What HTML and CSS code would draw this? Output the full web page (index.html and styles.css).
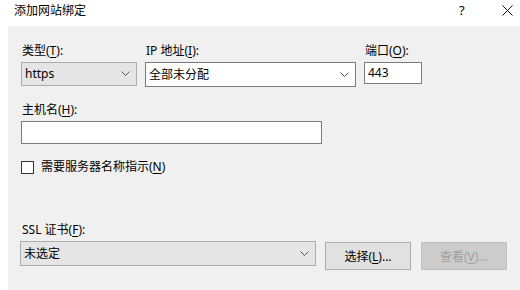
FILE: index.html
```html
<!DOCTYPE html>
<html lang="zh-CN">
<head>
<meta charset="utf-8">
<title>添加网站绑定</title>
<link rel="stylesheet" href="styles.css">
</head>
<body>
<div class="dialog">
  <div class="titlebar">
    <span class="title">添加网站绑定</span>
    <span class="help">?</span>
    <span class="close">
      <svg width="11" height="11" viewBox="0 0 11 11"><path d="M0.5 0.5 L10.5 10.5 M10.5 0.5 L0.5 10.5" stroke="#111" stroke-width="1" fill="none"/></svg>
    </span>
  </div>
  <div class="frame">
    <div class="panel">
      <div class="row top-row">
        <div class="field f-type">
          <div class="label">类型(<u>T</u>):</div>
          <div class="combo gray"><span>https</span><svg class="chev" width="9" height="5" viewBox="0 0 9 5"><path d="M0.5 0.5 L4.5 4.5 L8.5 0.5" stroke="#555" fill="none"/></svg></div>
        </div>
        <div class="field f-ip">
          <div class="label">IP 地址(<u>I</u>):</div>
          <div class="combo white"><span>全部未分配</span><svg class="chev" width="9" height="5" viewBox="0 0 9 5"><path d="M0.5 0.5 L4.5 4.5 L8.5 0.5" stroke="#555" fill="none"/></svg></div>
        </div>
        <div class="field f-port">
          <div class="label">端口(<u>O</u>):</div>
          <div class="textbox port">443</div>
        </div>
      </div>
      <div class="field f-host">
        <div class="label">主机名(<u>H</u>):</div>
        <div class="textbox host"></div>
      </div>
      <div class="check-row">
        <span class="checkbox"></span>
        <span class="check-label">需要服务器名称指示(<u>N</u>)</span>
      </div>
      <div class="field f-ssl">
        <div class="label">SSL 证书(<u>F</u>):</div>
        <div class="ssl-row">
          <div class="combo gray ssl"><span>未选定</span><svg class="chev" width="9" height="5" viewBox="0 0 9 5"><path d="M0.5 0.5 L4.5 4.5 L8.5 0.5" stroke="#555" fill="none"/></svg></div>
          <div class="button">选择(<u>L</u>)...</div>
          <div class="button disabled">查看(<u>V</u>)...</div>
        </div>
      </div>
    </div>
  </div>
</div>
</body>
</html>
```
FILE: styles.css
```css
html, body {
  margin: 0;
  padding: 0;
  background: #ffffff;
}
body {
  font-family: "Noto Sans", "Noto Sans CJK SC", sans-serif;
  font-size: 12px;
  color: #000;
}
u {
  text-decoration: underline;
  text-underline-offset: 2px;
}
.dialog {
  width: 520px;
  height: 290px;
  display: flex;
  flex-direction: column;
  overflow: hidden;
}
.titlebar {
  height: 26px;
  display: flex;
  align-items: center;
  background: #fff;
}
.title {
  margin-left: 14px;
  margin-top: -6px;
  flex: 1;
  font-size: 12px;
}
.help {
  width: 12px;
  margin-top: -6px;
  font-size: 13px;
  margin-right: 31px;
}
.close {
  margin-right: 7px;
  margin-top: -6px;
  display: flex;
}
.frame {
  flex: 1;
  display: flex;
  padding-left: 8px;
}
.panel {
  flex: 1;
  background: #f0f0f0;
  padding: 17px 0 0 13px;
}
.row {
  display: flex;
}
.label {
  height: 16px;
  line-height: 16px;
  margin-bottom: 3px;
  padding-left: 1px;
}
.f-type { width: 116px; margin-right: 8px; }
.f-ip { width: 211px; margin-right: 8px; }
.f-port { width: 58px; }
.combo {
  height: 23px;
  box-sizing: border-box;
  display: flex;
  align-items: center;
  justify-content: space-between;
  padding: 0 6px 1px 3px;
}
.combo.gray {
  background: #e5e5e5;
  border: 1px solid #adadad;
  height: 24px;
}
.combo.white {
  background: #fff;
  border: 1px solid #7a7a7a;
  height: 25px;
}
.textbox {
  background: #fff;
  border: 1px solid #7a7a7a;
  box-sizing: border-box;
  height: 23px;
  line-height: 20px;
  padding-left: 3px;
}
.port {
  height: 22px;
}
.f-host {
  margin-top: 15px;
}
.host {
  width: 301px;
}
.check-row {
  display: flex;
  align-items: center;
  margin-top: 15px;
}
.checkbox {
  width: 13px;
  height: 13px;
  box-sizing: border-box;
  border: 1px solid #333;
  background: #fff;
  margin-right: 7px;
}
.check-label {
  line-height: 16px;
}
.f-ssl {
  margin-top: 47px;
}
.ssl-row {
  display: flex;
  align-items: flex-start;
}
.combo.ssl {
  width: 296px;
  height: 25px;
  margin-left: -1px;
  margin-right: 9px;
  padding-left: 3px;
}
.button {
  width: 86px;
  height: 28px;
  margin-top: 1px;
  box-sizing: border-box;
  background: #e1e1e1;
  border: 1px solid #adadad;
  display: flex;
  align-items: center;
  justify-content: center;
  margin-right: 10px;
}
.button.disabled {
  background: #cccccc;
  border-color: #bfbfbf;
  color: #a0a0a0;
}
```
